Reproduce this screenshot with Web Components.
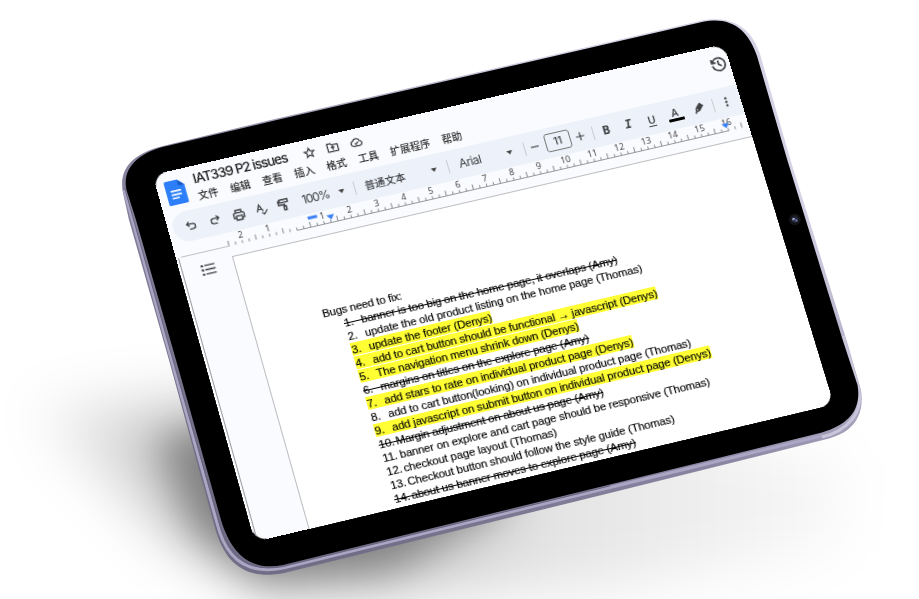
<!DOCTYPE html>
<html lang="zh">
<head>
<meta charset="utf-8">
<title>IAT339 P2 issues</title>
<style>
html,body{margin:0;background:#fff}
body{width:919px;height:599px;overflow:hidden}
</style>
</head>
<body>
<tablet-mockup>
  <tilted-screen quad="152.7,174.9 723.9,44.1 833.7,404.3 255,541.8">
    <doc-header></doc-header>
    <doc-toolbar></doc-toolbar>
    <doc-ruler></doc-ruler>
    <doc-page></doc-page>
  </tilted-screen>
</tablet-mockup>
<script>
const make = (name, html, setup) => customElements.define(name, class extends HTMLElement {
  connectedCallback() {
    if (this.shadowRoot) return;
    this.attachShadow({mode: 'open'}).innerHTML = typeof html === 'function' ? html(this) : html;
    if (setup) setup(this);
  }
});

/* Device body, its shadow and the camera; the screen goes in the slot. */
make('tablet-mockup', `
<style>
:host{display:block;position:relative;width:919px;height:599px;overflow:hidden;background:#fff}
svg,.screen{position:absolute;left:0;top:0}
</style>
<svg width="919" height="599" viewBox="0 0 919 599">
  <defs>
    <filter id="s1" x="-50%" y="-50%" width="200%" height="200%"><feGaussianBlur stdDeviation="28"/></filter>
    <filter id="s2" x="-50%" y="-50%" width="200%" height="200%"><feGaussianBlur stdDeviation="19"/></filter>
    <linearGradient id="rim" gradientUnits="userSpaceOnUse" x1="300" y1="520" x2="560" y2="60">
      <stop offset="0" stop-color="#716d86"/><stop offset=".5" stop-color="#8b87a3"/><stop offset="1" stop-color="#d6d2e6"/>
    </linearGradient>
    <linearGradient id="sh" gradientUnits="userSpaceOnUse" x1="60" y1="0" x2="860" y2="0">
      <stop offset="0" stop-color="#000" stop-opacity=".09"/><stop offset=".2" stop-color="#000" stop-opacity=".26"/><stop offset=".4" stop-color="#000" stop-opacity=".24"/><stop offset=".6" stop-color="#000" stop-opacity=".11"/><stop offset="1" stop-color="#000" stop-opacity=".02"/>
    </linearGradient>
  </defs>
  <path d="M35 410 L190 400 L700 430 L850 460 L840 550 L600 590 L270 592 L170 538 Z" fill="url(#sh)" filter="url(#s1)"/>
  <path d="M155 440 L300 400 L520 500 L390 572 L260 582 L195 532 Z" fill="#000" fill-opacity=".33" filter="url(#s2)"/>
  <path d="M123 193 C118 167 135 153 163 146 L276 118.8 L703 20.3 C733 15 752 29 760 54 L790.5 160 L846.5 340 L861 390 C865 417 852 432 829 438.5 L610 493 L283 573.3 C246 580 225 564 215 528 L169 360 L129 220 Z" fill="url(#rim)"/>
  <path d="M124 190 L171.500 360 L217 523 C226 560 248 575 283 568 L610 487.500 L823 435.500" fill="none" stroke="#aaa6c4" stroke-width="3"/>
  <path d="M822 437 C848 431 864 412 858.500 388 L843 336" fill="none" stroke="#c9c5da" stroke-width="3"/>
  <path d="M124.700 188 L173 360 L219 522 C229 558 250 572.500 283 566.500 L610 485.800" fill="none" stroke="#67637c" stroke-width="1"/>
  <path d="M126.500 190 C121.500 167 140 152 167 146 L276.700 120 L703 21.700 C732 16.500 748 30 757 56 L787.300 160 L842.700 340 L857.500 385 C862 410 848 425 822 432.500 L610 484.500 L283 565 C252 571 232 556 221 520 L176 360 L136 220 Z" fill="#000"/>
</svg>
<div class="screen"><slot></slot></div>
<svg width="919" height="599" viewBox="0 0 919 599" style="pointer-events:none">
  <circle cx="794.800" cy="219.500" r="5.800" fill="#131416"/><circle cx="794.800" cy="219.500" r="3.300" fill="#24273a"/>
  <circle cx="793.300" cy="219.200" r="1.300" fill="#8387b2"/><circle cx="796.300" cy="220.500" r="1.300" fill="#686ca0"/><circle cx="794" cy="218.600" r=".6" fill="#fff"/>
</svg>`);

/* Projects its 590x380 box on the four corner points in "quad" (TL TR BR BL). */
make('tilted-screen', `
<style>
:host{display:flex;flex-direction:column;width:590px;height:380px;border-radius:14px;overflow:hidden;background:#f9fbfe;transform-origin:0 0;color:#333;font-family:"Liberation Sans","Noto Sans CJK SC",sans-serif}
</style><slot></slot>`, el => {
  const [[x0,y0],[x1,y1],[x2,y2],[x3,y3]] = el.getAttribute('quad').split(' ').map(p => p.split(',').map(Number));
  const sx=x0-x1+x2-x3, sy=y0-y1+y2-y3, ax=x1-x2, ay=y1-y2, bx=x3-x2, by=y3-y2, d=ax*by-bx*ay;
  const g=(sx*by-bx*sy)/d, h=(ax*sy-sx*ay)/d, W=590, H=380;
  el.style.transform = `matrix3d(${[(x1-x0+g*x1)/W,(y1-y0+g*y1)/W,0,g/W,(x3-x0+h*x3)/H,(y3-y0+h*y3)/H,0,h/H,0,0,1,0,x0,y0,0,1].map(n=>n.toFixed(10)).join(',')})`;
});

/* A run of text whose letter spacing is adjusted so that it fills "w" pixels. */
make('fit-text', `<style>:host{display:inline-block;white-space:pre}</style><slot></slot>`, el => {
  const w = +el.getAttribute('w'), n = el.textContent.length;
  el.style.letterSpacing = ((w - el.offsetWidth) / n).toFixed(3) + 'px';
});

const ICONS = {
  docs: `<path d="M4 0h10l6 6v16.500a1.500 1.500 0 0 1-1.500 1.500H2.500A1.500 1.500 0 0 1 1 22.500v-21A1.500 1.500 0 0 1 2.500 0z" fill="#2d7ff9"/><path d="M14 0l6 6h-6z" fill="#1459c4"/><path d="M5.500 10.500h10M5.500 14h10M5.500 17.500h7" stroke="#fff" stroke-width="1.600" fill="none"/>`,
  star: `<path d="M12 3.500l2.600 5.700 6.200.6-4.700 4.100 1.400 6.100-5.500-3.200-5.500 3.200 1.400-6.100-4.700-4.100 6.200-.6z"/>`,
  folder: `<path d="M2.500 4.500h6.500l2 2.500h10.500v12.500h-19zM12 10v7M8.800 13.200l3.200-3.200 3.200 3.200"/>`,
  cloud: `<path d="M7 19.500a5 5 0 0 1-.7-9.900A6.500 6.500 0 0 1 18.500 11a4.300 4.300 0 0 1 0 8.500zM8.800 14l2.400 2.400 4.300-4.300"/>`,
  history: `<path d="M4 8.500A9 9 0 1 1 3.200 13M3 4v5.500h5.500M12 7v5.500l4 2.500"/>`,
  undo: `<path d="M8.500 4.500L4 9l4.500 4.500M4 9h10.500a4.700 4.700 0 0 1 0 9.500H8"/>`,
  redo: `<path d="M15.500 4.500L20 9l-4.500 4.500M20 9H9.500a4.700 4.700 0 0 0 0 9.500H16"/>`,
  print: `<path d="M7 8V3.500h10V8M7 17H3v-6.500Q3 8 5.500 8h13Q21 8 21 10.500V17h-4M7 13.500h10v7H7z"/>`,
  spell: `<path d="M2.500 16L8 3.500 13.500 16M4.500 12h7M11 18.500l3.500 3.500 7-7.500"/>`,
  paint: `<path d="M5 3h14v5H5zM5 5.500H2.500V12H13v3M11 15h4v6.500h-4z"/>`,
  minus: `<path d="M4 12h16"/>`,
  plus: `<path d="M3.500 12h17M12 3.500v17"/>`,
  pen: `<path d="M6 15l1.500-4.500L15 3l5 5-7.500 7.500L8 17z"/><path d="M9 12L16 5l2.500 2.500-6 7z" fill="#444"/><path d="M4 20l3-3" stroke-width="3"/>`,
  dots: `<g fill="#444" stroke="none"><circle cx="12" cy="3.500" r="2.700"/><circle cx="12" cy="12" r="2.700"/><circle cx="12" cy="20.500" r="2.700"/></g>`,
  list: `<g fill="#333" stroke="none"><circle cx="2.500" cy="5" r="1.900"/><circle cx="2.500" cy="12" r="1.900"/><circle cx="2.500" cy="19" r="1.900"/></g><path d="M6.500 5H23M6.500 12H23M6.500 19H23"/>`,
};
make('doc-icon', el => `
<style>:host{display:inline-block;line-height:0}svg{fill:none;stroke:#3c3d40;stroke-width:${el.getAttribute('sw')||2.3}}</style>
<svg width="${el.getAttribute('size')||13}" height="${el.getAttribute('size')||13}" viewBox="0 0 24 24"${el.getAttribute('name')==='docs'?' style="stroke:none"':''}>${ICONS[el.getAttribute('name')]}</svg>`);

make('doc-header', `
<style>
:host{display:flex;height:43px;flex:none;box-sizing:border-box;padding:0 3px 0 7px;color:#303134}
.logo{padding-top:9.500px;width:25px}
.mid{padding:3.500px 0 0 5.500px;flex:1}
.top{display:flex;height:19px;align-items:center}
.title{font:500 13.500px/19px Inter,"Noto Sans",sans-serif;color:#1b1b1b}
.icons{display:flex;gap:11px;padding-left:16px}
nav{display:flex;gap:12.200px;font:10.300px/16px "Noto Sans CJK SC",sans-serif;color:#2c2c2c;padding-left:.5px;font-weight:500}
.hist{padding-top:9.500px}
</style>
<div class="logo"><doc-icon name="docs" size="25"></doc-icon></div>
<div class="mid">
  <div class="top"><fit-text class="title" w="96.500">IAT339 P2 issues</fit-text>
    <div class="icons"><doc-icon name="star"></doc-icon><doc-icon name="folder"></doc-icon><doc-icon name="cloud"></doc-icon></div></div>
  <nav><span>文件</span><span>编辑</span><span>查看</span><span>插入</span><span>格式</span><span>工具</span><span>扩展程序</span><span>帮助</span></nav>
</div>
<div class="hist"><doc-icon name="history" size="17.500"></doc-icon></div>`);

/* One toolbar cell: width "w", optional gap "g" before it. */
make('tool-cell', el => `
<style>:host{display:flex;flex:none;justify-content:center;align-items:center;width:${el.getAttribute('w')}px;margin-left:${el.getAttribute('g')||0}px}</style><slot></slot>`);

make('doc-toolbar', `
<style>
:host{display:flex;height:31px;flex:none;box-sizing:border-box;margin-left:5px;padding-left:6.500px;border-radius:15.500px 0 0 15.500px;background:#edf2fa;align-items:stretch;color:#3c3d40}
i.sep{width:1px;height:14px;background:#c7cbd1}
i.arr{border:3.500px solid transparent;border-top:4px solid #444;border-bottom:0}
.t{font:500 10.400px "Noto Sans CJK SC",sans-serif}
.r{font:12px Inter,sans-serif}
.box{width:24px;height:17px;border:1px solid #747775;border-radius:3px;display:flex;align-items:center;justify-content:center;font:500 10.500px Inter,sans-serif}
.b{font:bold 11.500px "Open Sans",sans-serif}
.ser{font:italic bold 12px "Liberation Mono",monospace}
.u{font:600 11px "Open Sans",sans-serif;text-decoration:underline;text-underline-offset:2px}
.a{font:600 10.500px/10px "Open Sans",sans-serif;border-bottom:3px solid #000;width:16px;text-align:center;height:11px}
</style>
<tool-cell w="24"><doc-icon name="undo"></doc-icon></tool-cell>
<tool-cell w="24"><doc-icon name="redo"></doc-icon></tool-cell>
<tool-cell w="24"><doc-icon name="print" size="14"></doc-icon></tool-cell>
<tool-cell w="24"><doc-icon name="spell"></doc-icon></tool-cell>
<tool-cell w="21"><doc-icon name="paint" size="14"></doc-icon></tool-cell>
<tool-cell w="44"><fit-text class="r" w="28">100%</fit-text></tool-cell>
<tool-cell w="9"><i class="arr"></i></tool-cell>
<tool-cell w="17"><i class="sep"></i></tool-cell>
<tool-cell w="46"><span class="t">普通文本</span></tool-cell>
<tool-cell w="20" g="17.5"><i class="arr"></i></tool-cell>
<tool-cell w="8"><i class="sep"></i></tool-cell>
<tool-cell w="38"><fit-text class="r" w="23">Arial</fit-text></tool-cell>
<tool-cell w="24" g="10"><i class="arr"></i></tool-cell>
<tool-cell w="6"><i class="sep"></i></tool-cell>
<tool-cell w="16"><doc-icon name="minus" size="12"></doc-icon></tool-cell>
<tool-cell w="26" g="3"><span class="box">11</span></tool-cell>
<tool-cell w="14" g="3"><doc-icon name="plus" size="12"></doc-icon></tool-cell>
<tool-cell w="13"><i class="sep"></i></tool-cell>
<tool-cell w="14"><span class="b">B</span></tool-cell>
<tool-cell w="24" g="4"><span class="ser">I</span></tool-cell>
<tool-cell w="24"><span class="u">U</span></tool-cell>
<tool-cell w="25"><span class="a">A</span></tool-cell>
<tool-cell w="24"><doc-icon name="pen"></doc-icon></tool-cell>
<tool-cell w="6"><i class="sep"></i></tool-cell>
<tool-cell w="15" g="4"><doc-icon name="dots" size="10.500"></doc-icon></tool-cell>`);

make('doc-ruler', () => {
  const zero = 123.700, unit = 27.83;
  let ticks = '', nums = '';
  for (let q = -10; q <= 66; q++) {
    const x = (zero + q * unit / 4).toFixed(2), tall = q % 4 !== 0 && q % 2 === 0;
    ticks += `M${x} 13.500v${tall ? -5.500 : -3}`;
    if (q % 4 === 0 && q) nums += `<text x="${x}" y="8">${Math.abs(q / 4)}</text>`;
  }
  return `
<style>:host{display:block;height:24px;flex:none}svg{display:block}text{font:8.800px "Noto Sans","Liberation Sans",sans-serif;fill:#444;text-anchor:middle}</style>
<svg width="590" height="24" viewBox="0 0 590 24">
  <path d="M5 13.500H54" stroke="#c0c2c6" fill="none"/>
  <path d="${ticks}" stroke="#7b7e82" stroke-width=".9" fill="none"/>
  <path d="M${zero} 13.500H569.500" stroke="#8c8f93" stroke-width=".9" fill="none"/>
  ${nums}
  <path d="M137 2.500h9.500v3h-9.500zM155.500 5.500h8l-4 5zM563.500 5.500h8l-4 5z" fill="#3a80f5"/>
</svg>`;
});

const ITEMS = [
  ['banner is too big on the home page, it overlaps (Amy)', 263, 's'],
  ['update the old product listing on the home page (Thomas)', 284, ''],
  ['update the footer (Denys)', 125.5, 'h'],
  ['add to cart button should be functional → javascript (Denys)', 292, 'h'],
  ['The navigation menu shrink down (Denys)', 207, 'h'],
  ['margins on titles on the explore page (Amy)', 213.5, 's'],
  ['add stars to rate on individual product page (Denys)', 254, 'h'],
  ['add to cart button(looking) on individual product page (Thomas)', 310, ''],
  ['add javascript on submit button on individual product page (Denys)', 326, 'h'],
  ['Margin adjustment on about us page (Amy)', 212, 's'],
  ['banner on explore and cart page should be responsive (Thomas)', 317, ''],
  ['checkout page layout (Thomas)', 155.5, ''],
  ['Checkout button should follow the style guide (Thomas)', 272, ''],
  ['about us banner moves to explore page (Amy)', 228, 's'],
];
make('doc-page', () => `
<style>
:host{display:flex;height:282px;flex:none}
.side{width:54px;flex:none;position:relative;box-sizing:border-box;border-left:1px solid #fff;padding:0 0 0 19.500px}
.side::before{content:"";display:block;position:absolute;left:1px;top:-10px;bottom:0;width:1px;background:#9a9c9e}
.side doc-icon{margin-top:-.5px}
.paper{flex:1;background:#fff;border:1px solid #bbbdbf;border-right:0;border-bottom:0;padding:68.500px 0 0 70px;font:11.300px/14.050px "Liberation Sans","Noto Sans",sans-serif;color:#000;-webkit-text-stroke:.15px #000}
.row{display:flex;height:14.050px;margin-left:18.300px;width:max-content;white-space:pre}
.n{width:17.200px;letter-spacing:-.1px}
.h{background:linear-gradient(#ff3 0 12.700px,#fff 12.700px)}
.s{background:linear-gradient(#000,#000) 0 7.200px/100% 1.100px no-repeat}
</style>
<div class="side"><doc-icon name="list" size="15"></doc-icon></div>
<div class="paper"><fit-text w="80.500">Bugs need to fix:</fit-text>
${ITEMS.map(([t, w, c], i) => `<div class="row ${c}"><span class="n">${i + 1}.</span><fit-text w="${w}">${t}</fit-text></div>`).join('')}</div>`);
</script>
</body>
</html>
